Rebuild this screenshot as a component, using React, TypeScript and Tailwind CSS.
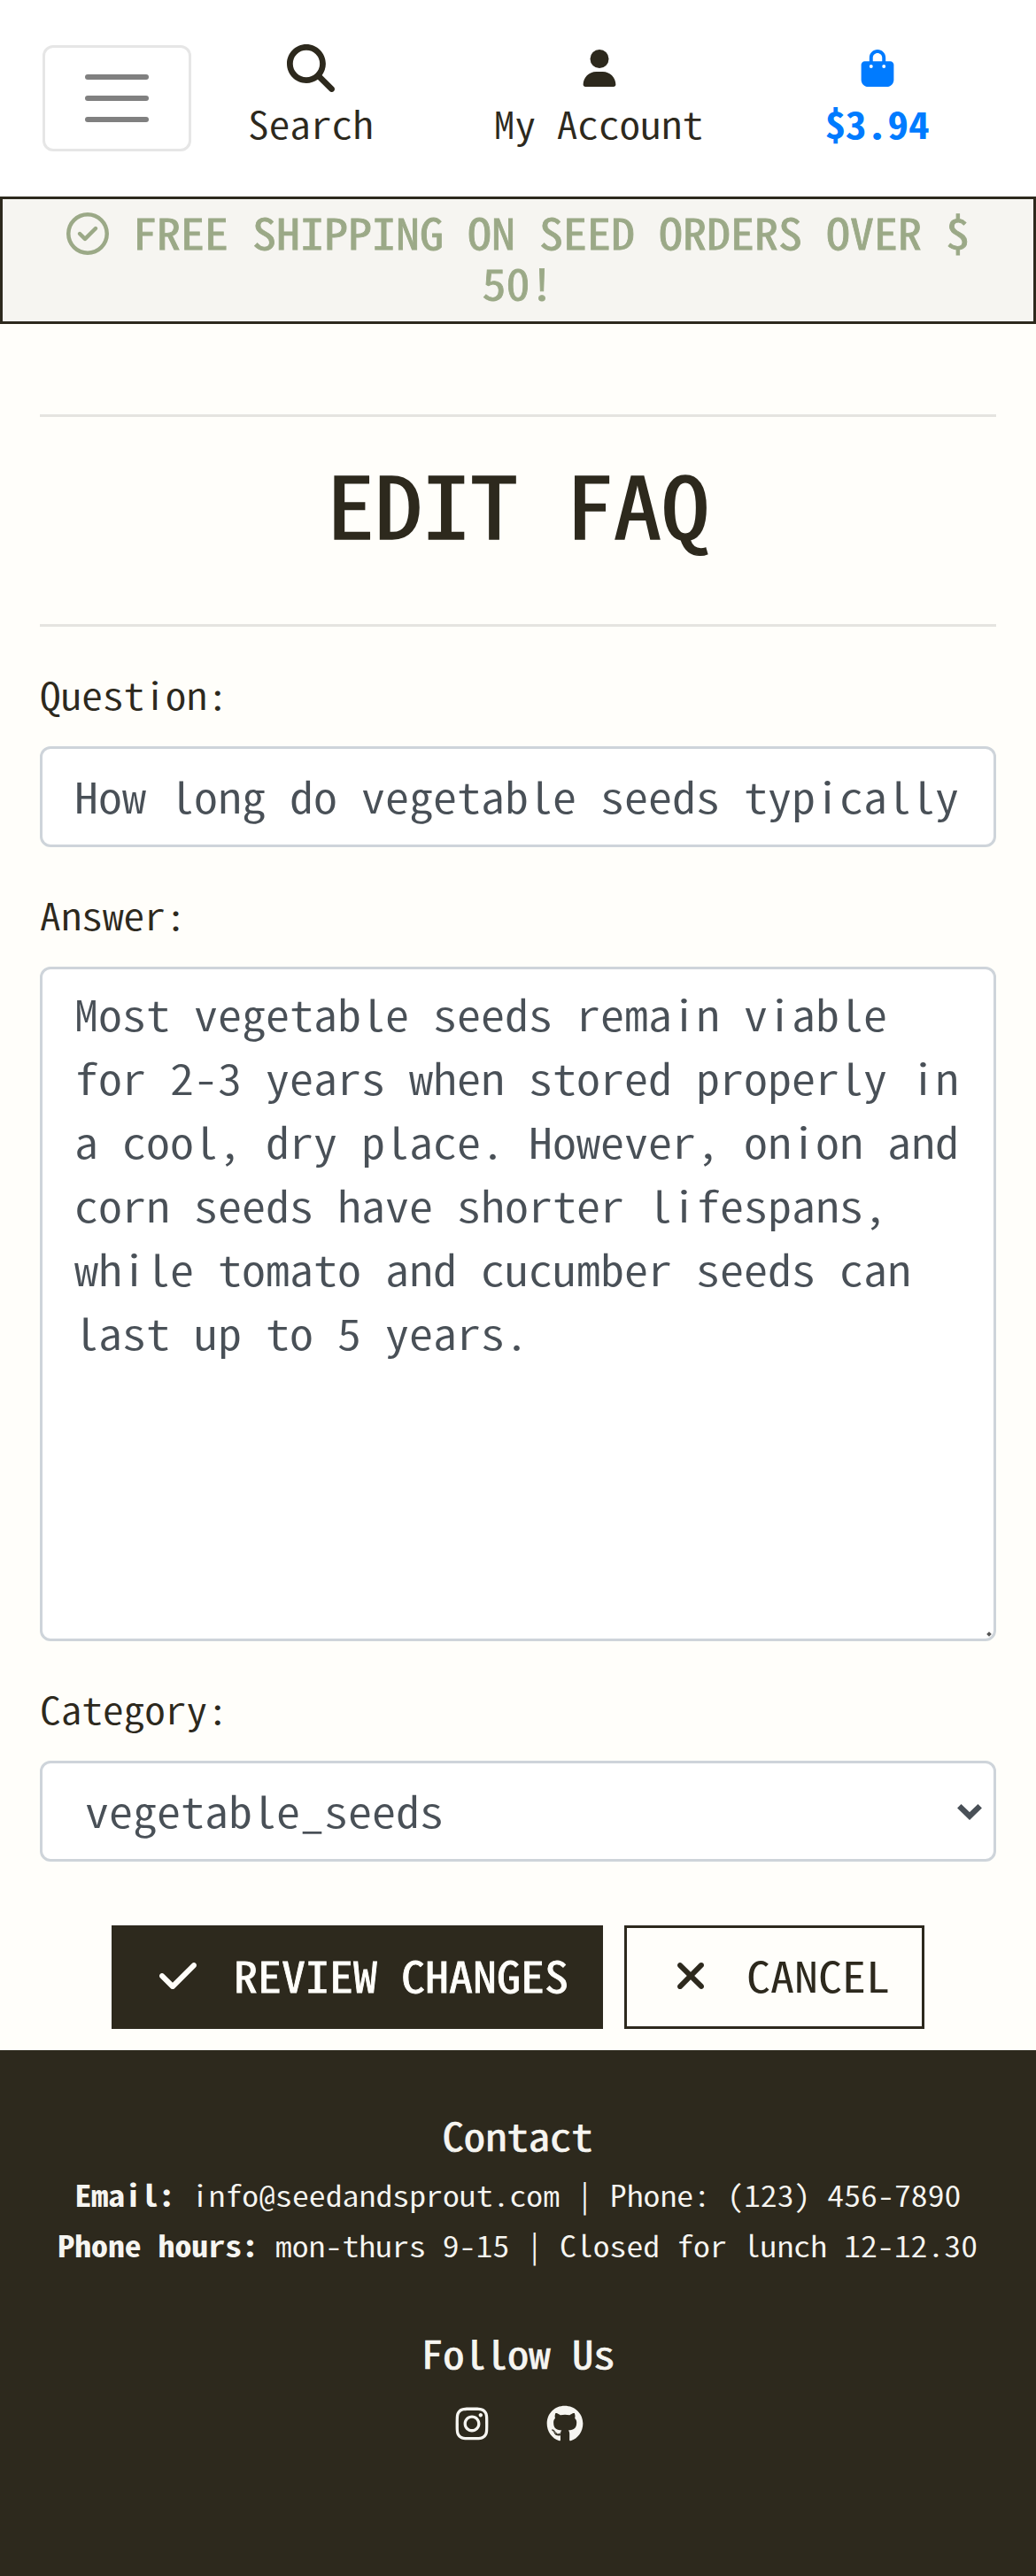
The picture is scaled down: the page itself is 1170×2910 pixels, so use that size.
import type { ReactNode } from 'react';
import {
  FaBagShopping,
  FaGithub,
  FaInstagram,
  FaMagnifyingGlass,
  FaRegCircleCheck,
  FaUser,
} from 'react-icons/fa6';

const question = 'How long do vegetable seeds typically last?';
const answer =
  'Most vegetable seeds remain viable for 2-3 years when stored properly in a cool, dry place. However, onion and corn seeds have shorter lifespans, while tomato and cucumber seeds can last up to 5 years.';

/* Half-width glyphs are half an em wide; the stretch brings them to 9/16 em. */
function Wide({ children, className = '' }: { children: ReactNode; className?: string }) {
  return <span className={`block scale-x-[1.125] whitespace-nowrap ${className}`}>{children}</span>;
}

function NavItem({ icon, label, className }: { icon: ReactNode; label: string; className: string }) {
  return (
    <a href="#" className={`flex flex-col items-center text-[42px] leading-[63px] ${className}`}>
      <span className="mb-[3px] flex h-[54px] items-center">{icon}</span>
      <Wide>{label}</Wide>
    </a>
  );
}

function Label({ children, htmlFor }: { children: string; htmlFor: string }) {
  return (
    <label htmlFor={htmlFor} className="text-[42px] leading-[63px]">
      <Wide className="origin-left">{children}</Wide>
    </label>
  );
}

/* A weight between regular and medium. */
const semi = 'font-normal [-webkit-text-stroke:0.016em_currentColor]';

const box = 'relative overflow-hidden rounded-[12px] border-3 border-[#ced4da] bg-white text-[48px] text-[#495057]';

export default function App() {
  return (
    <div className="flex h-[2910px] w-[1170px] flex-col overflow-hidden bg-[#fffefa] font-['Noto_Sans_CJK_SC','DejaVu_Sans_Mono',monospace] font-[350] text-[#2d291d] [font-feature-settings:'hwid']">
      <nav className="flex h-[222px] shrink-0 items-start bg-white pl-12 pt-[51px]">
        <button
          aria-label="Menu"
          className="flex h-[120px] w-[168px] flex-col items-center justify-center gap-[18px] rounded-[12px] border-3 border-[#e6e6e6]"
        >
          <span className="h-1.5 w-[72px] rounded-full bg-[#808080]" />
          <span className="h-1.5 w-[72px] rounded-full bg-[#808080]" />
          <span className="h-1.5 w-[72px] rounded-full bg-[#808080]" />
        </button>
        <NavItem className="ml-[54px] w-[162px] -mt-px" icon={<FaMagnifyingGlass size={54} />} label="Search" />
        <NavItem className="ml-[112px] w-[265px] -mt-px" icon={<FaUser size={42} />} label="My Account" />
        <NavItem
          className="ml-[109px] w-[146px] -mt-px font-bold text-[#007bff]"
          icon={<FaBagShopping size={42} />}
          label="$3.94"
        />
      </nav>

      <div
        className={`h-36 shrink-0 border-3 border-[#2d291d] bg-[#f6f5f1] pt-2 text-[48px] leading-[57px] text-[#9ba987] ${semi}`}
      >
        <div className="flex items-center pl-[72px]">
          <FaRegCircleCheck size={48} className="mt-1 shrink-0" />
          <Wide className="ml-[27px] origin-left">FREE SHIPPING ON SEED ORDERS OVER $</Wide>
        </div>
        <Wide className="text-center">50!</Wide>
      </div>

      <main className="flex flex-col px-[45px] pt-[102px]">
        <hr className="border-0 h-[3px] bg-[#e5e4e0]" />
        <h1 className={`pt-[39px] text-center text-[96px] leading-[116px] ${semi}`}>
          <Wide>EDIT FAQ</Wide>
        </h1>
        <hr className="mt-[79px] h-[3px] border-0 bg-[#e5e4e0]" />

        <form className="flex flex-col pt-11">
          <Label htmlFor="question">Question:</Label>
          <div className={`${box} mt-7 h-[114px] pl-9`}>
            <input
              id="question"
              defaultValue={question}
              className="-mt-0.5 block h-[108px] w-[890px] origin-left scale-x-[1.125] outline-none"
            />
          </div>

          <div className="mt-11 flex flex-col">
            <Label htmlFor="answer">Answer:</Label>
          </div>
          <div className={`${box} mt-7 h-[762px] pl-9 pt-[13px]`}>
            <textarea
              id="answer"
              defaultValue={answer}
              className="block h-[740px] w-[890px] origin-left scale-x-[1.125] resize-none overflow-hidden leading-[72px] outline-none"
            />
            <span className="absolute bottom-[3px] right-[3px] size-1 rotate-45 bg-[#555]" />
          </div>

          <div className="mt-11 flex flex-col">
            <Label htmlFor="category">Category:</Label>
          </div>
          <div className={`${box} mt-7 h-[114px] pl-12`}>
            <select
              id="category"
              className="-mt-0.5 block h-[108px] w-[860px] origin-left scale-x-[1.125] appearance-none outline-none"
            >
              <option>vegetable_seeds</option>
            </select>
            <svg
              viewBox="0 0 28 18"
              className="pointer-events-none absolute right-[13px] top-[46px] h-[18px] w-7"
              fill="none"
              stroke="#495057"
              strokeWidth="6.4"
            >
              <path d="M2.3 2.3 14 13.6 25.7 2.3" />
            </svg>
          </div>

          <div className="mt-[72px] flex justify-center gap-6 text-[48px] leading-[72px]">
            <button className={`flex h-[117px] w-[555px] items-center bg-[#2d291d] pb-1 pl-[51px] text-[#fffefa] ${semi}`}>
              <svg viewBox="0 0 512 512" className="size-12" fill="currentColor">
                <path d="M470.6 105.4c12.5 12.5 12.5 32.8 0 45.3l-256 256c-12.5 12.5-32.8 12.5-45.3 0l-128-128c-12.5-12.5-12.5-32.8 0-45.3s32.8-12.5 45.3 0L192 338.7 425.4 105.4c12.5-12.5 32.8-12.5 45.3 0z" />
              </svg>
              <Wide className="-mt-1 ml-[39px] origin-left">REVIEW CHANGES</Wide>
            </button>
            <button className="flex h-[117px] w-[339px] items-center border-3 border-[#2d291d] pb-1 pl-[57px] font-normal">
              <svg viewBox="0 0 320 512" className="h-12 w-[30px]" fill="currentColor">
                <path d="M310.6 150.6c12.5-12.5 12.5-32.8 0-45.3s-32.8-12.5-45.3 0L160 210.7 54.6 105.4c-12.5-12.5-32.8-12.5-45.3 0s-12.5 32.8 0 45.3L114.7 256 9.4 361.4c-12.5 12.5-12.5 32.8 0 45.3s32.8 12.5 45.3 0L160 301.3 265.4 406.6c12.5 12.5 32.8 12.5 45.3 0s12.5-32.8 0-45.3L205.3 256 310.6 150.6z" />
              </svg>
              <Wide className="-mt-1 ml-12 origin-left">CANCEL</Wide>
            </button>
          </div>
        </form>
      </main>

      <footer className="mt-6 flex grow flex-col items-center bg-[#2d291d] pt-[69px] text-[#f6f5f1]">
        <h5 className={`text-[43.2px] leading-[52px] ${semi}`}>
          <Wide>Contact</Wide>
        </h5>
        <div className="mt-[13px] flex flex-col items-center text-[33.6px] leading-[57px]">
          <Wide>
            <strong>Email:</strong> info@seedandsprout.com | Phone: (123) 456-7890
          </Wide>
          <Wide>
            <strong>Phone hours:</strong> mon-thurs 9-15 | Closed for lunch 12-12.30
          </Wide>
        </div>
        <h5 className={`mt-[67px] text-[43.2px] leading-[52px] ${semi}`}>
          <Wide>Follow Us</Wide>
        </h5>
        <div className="ml-0.5 mt-[34px] flex w-[146px] justify-between">
          <FaInstagram size={42} className="-ml-px" />
          <FaGithub size={42} />
        </div>
      </footer>
    </div>
  );
}
